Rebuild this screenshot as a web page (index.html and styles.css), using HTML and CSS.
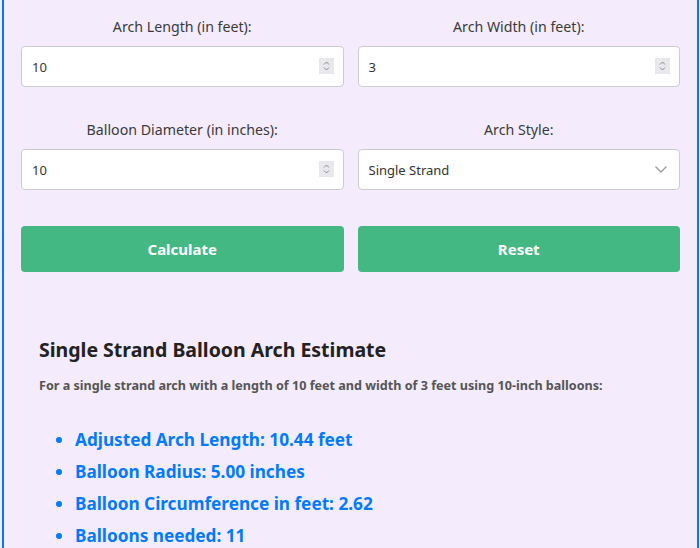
FILE: index.html
```
<!DOCTYPE html>
<html lang="en">
<head>
    <meta charset="UTF-8">
    <meta name="viewport" content="width=device-width, initial-scale=1.0">
    <title>Balloon Arch Calculator</title>
    <link rel="stylesheet" href="styles.css">
</head>
<body>

<div class="calculator">
    <div class="form-grid">
        <div class="field">
            <label for="archLength">Arch Length (in feet):</label>
            <div class="input-wrap">
                <input type="text" id="archLength" value="10">
                <svg class="spinner" width="15" height="16" viewBox="0 0 15 16"><rect width="15" height="16" fill="#e9e9ed"/><path d="M5 6.5 L7.5 4 L10 6.5 M5 9.5 L7.5 12 L10 9.5" fill="none" stroke="#8a8a8a" stroke-width="1"/></svg>
            </div>
        </div>
        <div class="field">
            <label for="archWidth">Arch Width (in feet):</label>
            <div class="input-wrap">
                <input type="text" id="archWidth" value="3">
                <svg class="spinner" width="15" height="16" viewBox="0 0 15 16"><rect width="15" height="16" fill="#e9e9ed"/><path d="M5 6.5 L7.5 4 L10 6.5 M5 9.5 L7.5 12 L10 9.5" fill="none" stroke="#8a8a8a" stroke-width="1"/></svg>
            </div>
        </div>
        <div class="field">
            <label for="balloonDiameter">Balloon Diameter (in inches):</label>
            <div class="input-wrap">
                <input type="text" id="balloonDiameter" value="10">
                <svg class="spinner" width="15" height="16" viewBox="0 0 15 16"><rect width="15" height="16" fill="#e9e9ed"/><path d="M5 6.5 L7.5 4 L10 6.5 M5 9.5 L7.5 12 L10 9.5" fill="none" stroke="#8a8a8a" stroke-width="1"/></svg>
            </div>
        </div>
        <div class="field">
            <label for="archStyle">Arch Style:</label>
            <div class="input-wrap">
                <select id="archStyle">
                    <option>Single Strand</option>
                    <option>Double Strand</option>
                </select>
                <svg class="chevron" width="12" height="7" viewBox="0 0 12 7"><path d="M0.5 0.5 L6 6 L11.5 0.5" fill="none" stroke="#9a9a9a" stroke-width="1.3"/></svg>
            </div>
        </div>
    </div>

    <div class="buttons">
        <button class="button">Calculate</button>
        <button class="button">Reset</button>
    </div>

    <div class="result">
        <h2>Single Strand Balloon Arch Estimate</h2>
        <p>For a single strand arch with a length of 10 feet and width of 3 feet using 10-inch balloons:</p>
        <ul>
            <li>Adjusted Arch Length: 10.44 feet</li>
            <li>Balloon Radius: 5.00 inches</li>
            <li>Balloon Circumference in feet: 2.62</li>
            <li>Balloons needed: 11</li>
        </ul>
    </div>
</div>

</body>
</html>
```

FILE: styles.css
```
* {
    margin: 0;
    padding: 0;
    box-sizing: border-box;
}
body {
    font-family: 'Noto Sans', 'Open Sans', sans-serif;
    background: #f4ecfd;
    color: #333;
    overflow: hidden;
}
.calculator {
    margin-left: 2px;
    width: 697px;
    border-left: 2px solid #007bff;
    border-right: 2px solid #007bff;
    padding: 16px 17px 40px;
    background: #f4ecfd;
}
.form-grid {
    display: grid;
    grid-template-columns: 1fr 1fr;
    column-gap: 14px;
    row-gap: 32px;
}
.field label {
    display: block;
    text-align: center;
    font-size: 14.2px;
    line-height: 22px;
    color: #3a3a3a;
    margin-bottom: 8px;
}
.input-wrap {
    position: relative;
}
.input-wrap input, .input-wrap select {
    display: block;
    width: 100%;
    height: 41px;
    padding: 0 10px;
    font-family: inherit;
    font-size: 13px;
    color: #333;
    background: #fff;
    border: 1px solid #ccc;
    border-radius: 4px;
    outline: none;
    appearance: none;
    -webkit-appearance: none;
}
.spinner {
    position: absolute;
    right: 10px;
    top: 12px;
}
.chevron {
    position: absolute;
    right: 13px;
    top: 17px;
}
.buttons {
    display: grid;
    grid-template-columns: 1fr 1fr;
    column-gap: 14px;
    margin-top: 36px;
}
.button {
    height: 46px;
    background-color: #43b883;
    color: #fff;
    font-family: inherit;
    font-size: 15px;
    font-weight: bold;
    border: none;
    border-radius: 4px;
    cursor: pointer;
}
.result {
    margin-top: 48px;
    padding: 18px;
}
.result h2 {
    font-size: 19.5px;
    line-height: 24px;
    color: #222;
    margin-bottom: 14px;
}
.result p {
    font-size: 12.6px;
    line-height: 20px;
    font-weight: bold;
    color: #555;
}
.result ul {
    margin-top: 28px;
    padding-left: 36px;
}
.result li {
    font-size: 17.2px;
    line-height: 32px;
    font-weight: bold;
    color: #007bff;
}
```
